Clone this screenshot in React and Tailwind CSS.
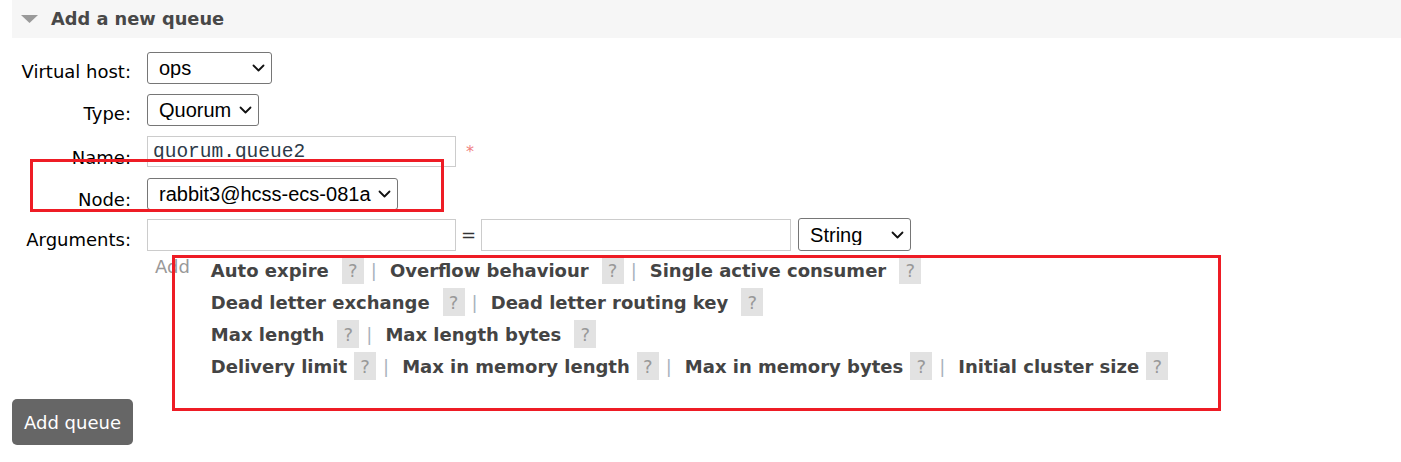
import React from 'react';

const label = "w-[119px] shrink-0 text-right pt-[8px] leading-6 text-[18px] text-black";

const Chevron = () => (
  <svg className="absolute right-[7px] top-1/2 -translate-y-1/2 pointer-events-none" width="13" height="8" viewBox="0 0 13 8" fill="none">
    <path d="M1.5 1.5l5 5 5-5" stroke="#111" strokeWidth="1.8" strokeLinecap="round" strokeLinejoin="round" />
  </svg>
);

const Select = ({ width, value, options }) => (
  <div className={`relative ${width} h-[32px]`}>
    <select
      defaultValue={value}
      className="appearance-none w-full h-full border border-[#767676] rounded-[3px] bg-white pl-[11px] pr-[24px] text-[20px] text-black font-['Liberation_Sans',Arial,sans-serif] leading-none"
    >
      {options.map((o) => (
        <option key={o}>{o}</option>
      ))}
    </select>
    <Chevron />
  </div>
);

const Q = ({ gap }) => (
  <span className={`${gap} inline-flex items-center justify-center w-[22px] h-[28px] bg-[#e2e2e2] text-[#999] font-normal text-[18px]`}>?</span>
);

const Sep = () => (
  <span className="ml-[7px] mr-[13px] font-normal text-[#a9b3bd] text-[18px]">|</span>
);

const rows = [
  { gap: 'ml-[13px]', items: ['Auto expire', 'Overflow behaviour', 'Single active consumer'] },
  { gap: 'ml-[13px]', items: ['Dead letter exchange', 'Dead letter routing key'] },
  { gap: 'ml-[13px]', items: ['Max length', 'Max length bytes'] },
  { gap: 'ml-[7px]', items: ['Delivery limit', 'Max in memory length', 'Max in memory bytes', 'Initial cluster size'] },
];

const App = () => {
  return (
    <div className="relative w-[1401px] h-[462px] bg-white pl-[12px] font-['DejaVu_Sans',Verdana,sans-serif] overflow-hidden">
      <div className="h-[38px] bg-[#f6f6f6] flex items-center pl-[9px]">
        <svg width="17" height="8" viewBox="0 0 17 8">
          <path d="M0 0h17L8.5 8z" fill="#9a9a9a" />
        </svg>
        <h2 className="ml-[13px] text-[17.8px] font-bold text-[#484848] leading-none">Add a new queue</h2>
      </div>

      <div className="mt-[14px] flex flex-col gap-[10px]">
        <div className="flex gap-[16px] h-[32px]">
          <div className={label}>Virtual host:</div>
          <Select width="w-[125px]" value="ops" options={['ops', '/']} />
        </div>
        <div className="flex gap-[16px] h-[32px]">
          <div className={label}>Type:</div>
          <Select width="w-[112px]" value="Quorum" options={['Classic', 'Quorum', 'Stream']} />
        </div>
        <div className="flex gap-[16px] h-[32px]">
          <div className={`${label} pt-[10px]`}>Name:</div>
          <input
            defaultValue="quorum.queue2"
            className="w-[309px] h-[31px] border border-[#cccccc] px-[5px] text-[19.5px] text-[#2d3a48] font-['Liberation_Mono','Courier_New',monospace] outline-none"
          />
          <span className="-ml-[6px] pt-[4px] text-[#f08080] text-[16px]">*</span>
        </div>
        <div className="flex gap-[16px] h-[32px]">
          <div className={`${label} pt-[10px]`}>Node:</div>
          <Select width="w-[251px]" value="rabbit3@hcss-ecs-081a" options={['rabbit3@hcss-ecs-081a']} />
        </div>
        <div className="flex gap-[16px] h-[33px] -mt-[2px]">
          <div className={`${label} pt-[10px]`}>Arguments:</div>
          <div className="flex items-center gap-[5px]">
            <input className="w-[309px] h-[32px] border border-[#cccccc] outline-none" />
            <span className="text-[18px] text-[#333]">=</span>
            <input className="w-[310px] h-[32px] border border-[#cccccc] outline-none" />
            <Select width="w-[113px] h-[33px] ml-[2px]" value="String" options={['String', 'Number', 'Boolean', 'List']} />
          </div>
        </div>
      </div>

      <div className="flex mt-[5px] pl-[143px]">
        <span className="-mt-[1px] text-[18px] text-[#999] leading-6">Add</span>
        <div className="ml-[21px] flex flex-col gap-[4px]">
          {rows.map((r, i) => (
            <div key={i} className="flex items-center h-[28px] text-[18px] font-bold text-[#444]">
              {r.items.map((t, j) => (
                <React.Fragment key={t}>
                  {j > 0 && <Sep />}
                  <span>{t}</span>
                  <Q gap={r.gap} />
                </React.Fragment>
              ))}
            </div>
          ))}
        </div>
      </div>

      <button className="mt-[19px] w-[121px] h-[46px] rounded-[5px] bg-[#666] text-white text-[18px]">Add queue</button>

      <div className="absolute left-[30px] top-[159px] w-[414px] h-[53px] border-[3px] border-[#ee1c25]" />
      <div className="absolute left-[172px] top-[255px] w-[1049px] h-[156px] border-[3px] border-[#ee1c25]" />
    </div>
  );
};

export default App;
